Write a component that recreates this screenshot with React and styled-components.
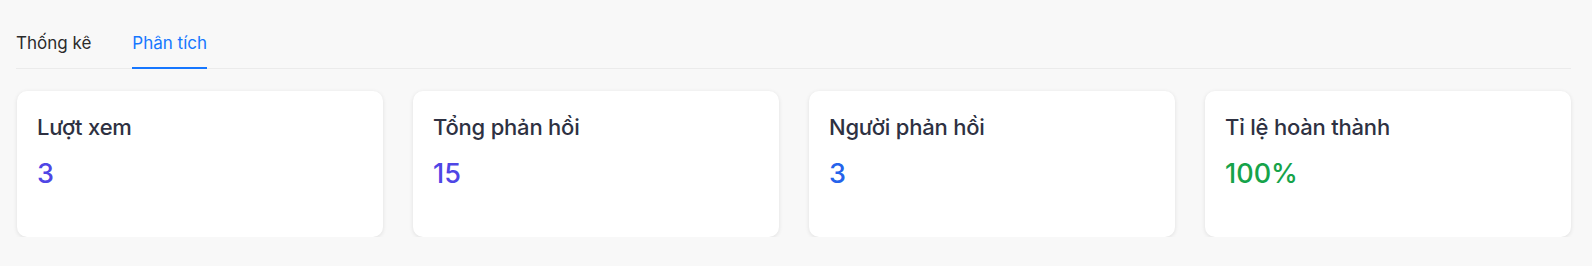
import styled, { createGlobalStyle } from "styled-components"

const GlobalStyle = createGlobalStyle`
  body {
    margin: 0;
    background: #f8f8f8;
    font-family: "Inter", "Liberation Sans", sans-serif;
  }
`

const Page = styled.div`
  padding: 24px 21px 0 16px;
`

const Tabs = styled.div`
  display: flex;
  gap: 41px;
  border-bottom: 1px solid #ebebeb;
`

const Tab = styled.div`
  padding: 7px 0 12px;
  font-size: 17px;
  line-height: 24px;
  color: ${props => props.active ? "#1677ff" : "#2b2b2b"};
  border-bottom: 2px solid ${props => props.active ? "#1677ff" : "transparent"};
  margin-bottom: -1px;
  cursor: pointer;
`

const Cards = styled.div`
  margin-top: 22px;
  display: grid;
  grid-template-columns: repeat(4, 1fr);
  gap: 30px;
  padding-left: 1px;
`

const Card = styled.div`
  height: 146px;
  box-sizing: border-box;
  padding: 21px 20px;
  background: #fff;
  border-radius: 10px;
  box-shadow: 0 1px 4px rgba(0, 0, 0, 0.1);
`

const Label = styled.div`
  font-size: 22px;
  font-weight: 500;
  letter-spacing: -0.2px;
  color: #2e3142;
  line-height: 30px;
`

const Value = styled.div`
  margin-top: 16px;
  font-size: 27px;
  font-weight: 500;
  color: ${props => props.color};
  line-height: 32px;
`

const stats = [
  { label: "Lượt xem", value: "3", color: "#4f46e5" },
  { label: "Tổng phản hồi", value: "15", color: "#4f46e5" },
  { label: "Người phản hồi", value: "3", color: "#2563eb" },
  { label: "Tỉ lệ hoàn thành", value: "100%", color: "#16a34a" },
]

const App = () => {
  return (
    <Page>
      <GlobalStyle />
      <Tabs>
        <Tab>Thống kê</Tab>
        <Tab active>Phân tích</Tab>
      </Tabs>
      <Cards>
        {stats.map(s => (
          <Card key={s.label}>
            <Label>{s.label}</Label>
            <Value color={s.color}>{s.value}</Value>
          </Card>
        ))}
      </Cards>
    </Page>
  )
}

export default App
